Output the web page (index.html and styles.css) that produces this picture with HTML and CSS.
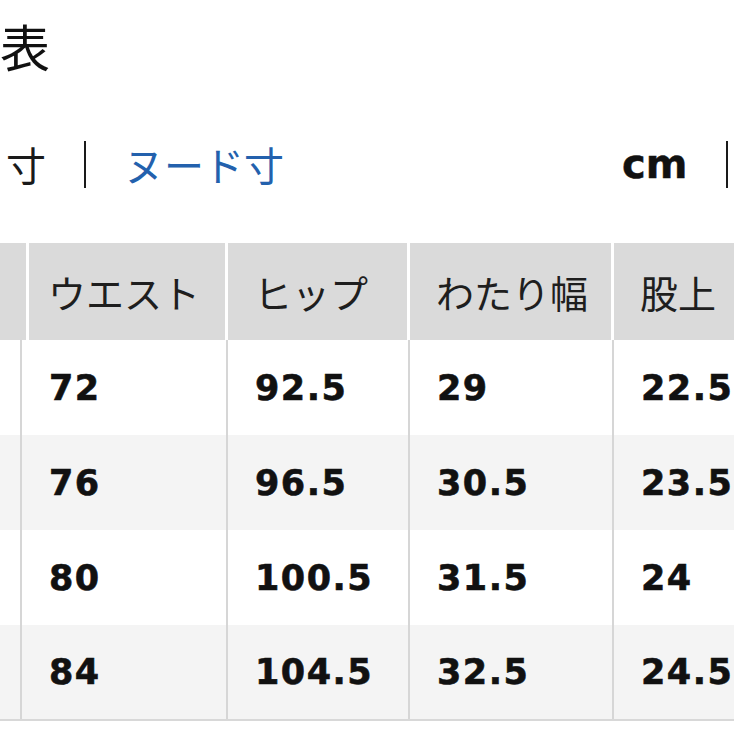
FILE: index.html
```html
<!DOCTYPE html>
<html lang="ja">
<head>
<meta charset="utf-8">
<title>サイズ表</title>
<link rel="stylesheet" href="styles.css">
</head>
<body>
<div class="page">
  <h1 class="title">表</h1>
  <div class="toolbar">
    <div class="tabs">
      <span class="tab">寸</span>
      <span class="sep"></span>
      <span class="tab active">ヌード寸</span>
    </div>
    <div class="units">
      <span class="unit">cm</span>
      <span class="sep"></span>
    </div>
  </div>
  <div class="table">
    <div class="row head">
      <div class="cell"></div>
      <div class="cell">ウエスト</div>
      <div class="cell">ヒップ</div>
      <div class="cell">わたり幅</div>
      <div class="cell">股上</div>
    </div>
    <div class="row">
      <div class="cell"></div>
      <div class="cell num">72</div>
      <div class="cell num">92.5</div>
      <div class="cell num">29</div>
      <div class="cell num">22.5</div>
    </div>
    <div class="row alt">
      <div class="cell"></div>
      <div class="cell num">76</div>
      <div class="cell num">96.5</div>
      <div class="cell num">30.5</div>
      <div class="cell num">23.5</div>
    </div>
    <div class="row">
      <div class="cell"></div>
      <div class="cell num">80</div>
      <div class="cell num">100.5</div>
      <div class="cell num">31.5</div>
      <div class="cell num">24</div>
    </div>
    <div class="row alt last">
      <div class="cell"></div>
      <div class="cell num">84</div>
      <div class="cell num">104.5</div>
      <div class="cell num">32.5</div>
      <div class="cell num">24.5</div>
    </div>
  </div>
</div>
</body>
</html>
```
FILE: styles.css
```css
html, body {
  margin: 0;
  padding: 0;
  background: #ffffff;
  overflow: hidden;
}

.page {
  width: 734px;
  font-family: "Noto Sans CJK JP", "Noto Sans", sans-serif;
  color: #1a1a1a;
}

.title {
  margin: 20px 0 0 0;
  font-size: 50px;
  line-height: 50px;
  font-weight: 400;
  color: #111;
}

.toolbar {
  margin-top: 70px;
  height: 48px;
  display: flex;
  align-items: center;
  white-space: nowrap;
}

.tabs {
  display: flex;
  align-items: center;
  gap: 38px;
  padding-left: 6px;
}

.tab {
  font-size: 40px;
  line-height: 48px;
  color: #1a1a1a;
}

.tab.active {
  color: #2361ad;
}

.sep {
  display: block;
  width: 2px;
  height: 47px;
  background: #1a1a1a;
}

.units {
  display: flex;
  align-items: center;
  gap: 39px;
  margin-left: 338px;
}

.unit {
  font-family: "DejaVu Sans", sans-serif;
  font-weight: 700;
  font-size: 40px;
  line-height: 48px;
  color: #111;
  -webkit-text-stroke: 0.5px #111;
}

.table {
  margin-top: 55px;
  border-bottom: 2px solid #d8d8d8;
  overflow: hidden;
}

.row {
  display: grid;
  grid-template-columns: 22px 206px 182px 204px 140px;
  height: 95px;
  background: #ffffff;
}

.row.head {
  height: 97px;
  background: #dadada;
}

.row.alt {
  background: #f4f4f4;
}

.row.last {
  height: 94px;
}

.cell {
  box-sizing: border-box;
  display: flex;
  align-items: center;
  padding-left: 27px;
  border-right: 2px solid #d6d6d6;
  font-size: 38px;
  color: #1e1e1e;
  white-space: nowrap;
}

.cell:last-child {
  border-right: none;
}

.row.head .cell {
  border-right: 3px solid #ffffff;
  padding-left: 26px;
}

.row.head .cell:last-child {
  border-right: none;
}

.cell:first-child {
  padding-left: 0;
}

.num {
  font-family: "DejaVu Sans", sans-serif;
  font-weight: 700;
  font-size: 35px;
  letter-spacing: 1.5px;
  color: #111;
  -webkit-text-stroke: 0.6px #111;
}
```
